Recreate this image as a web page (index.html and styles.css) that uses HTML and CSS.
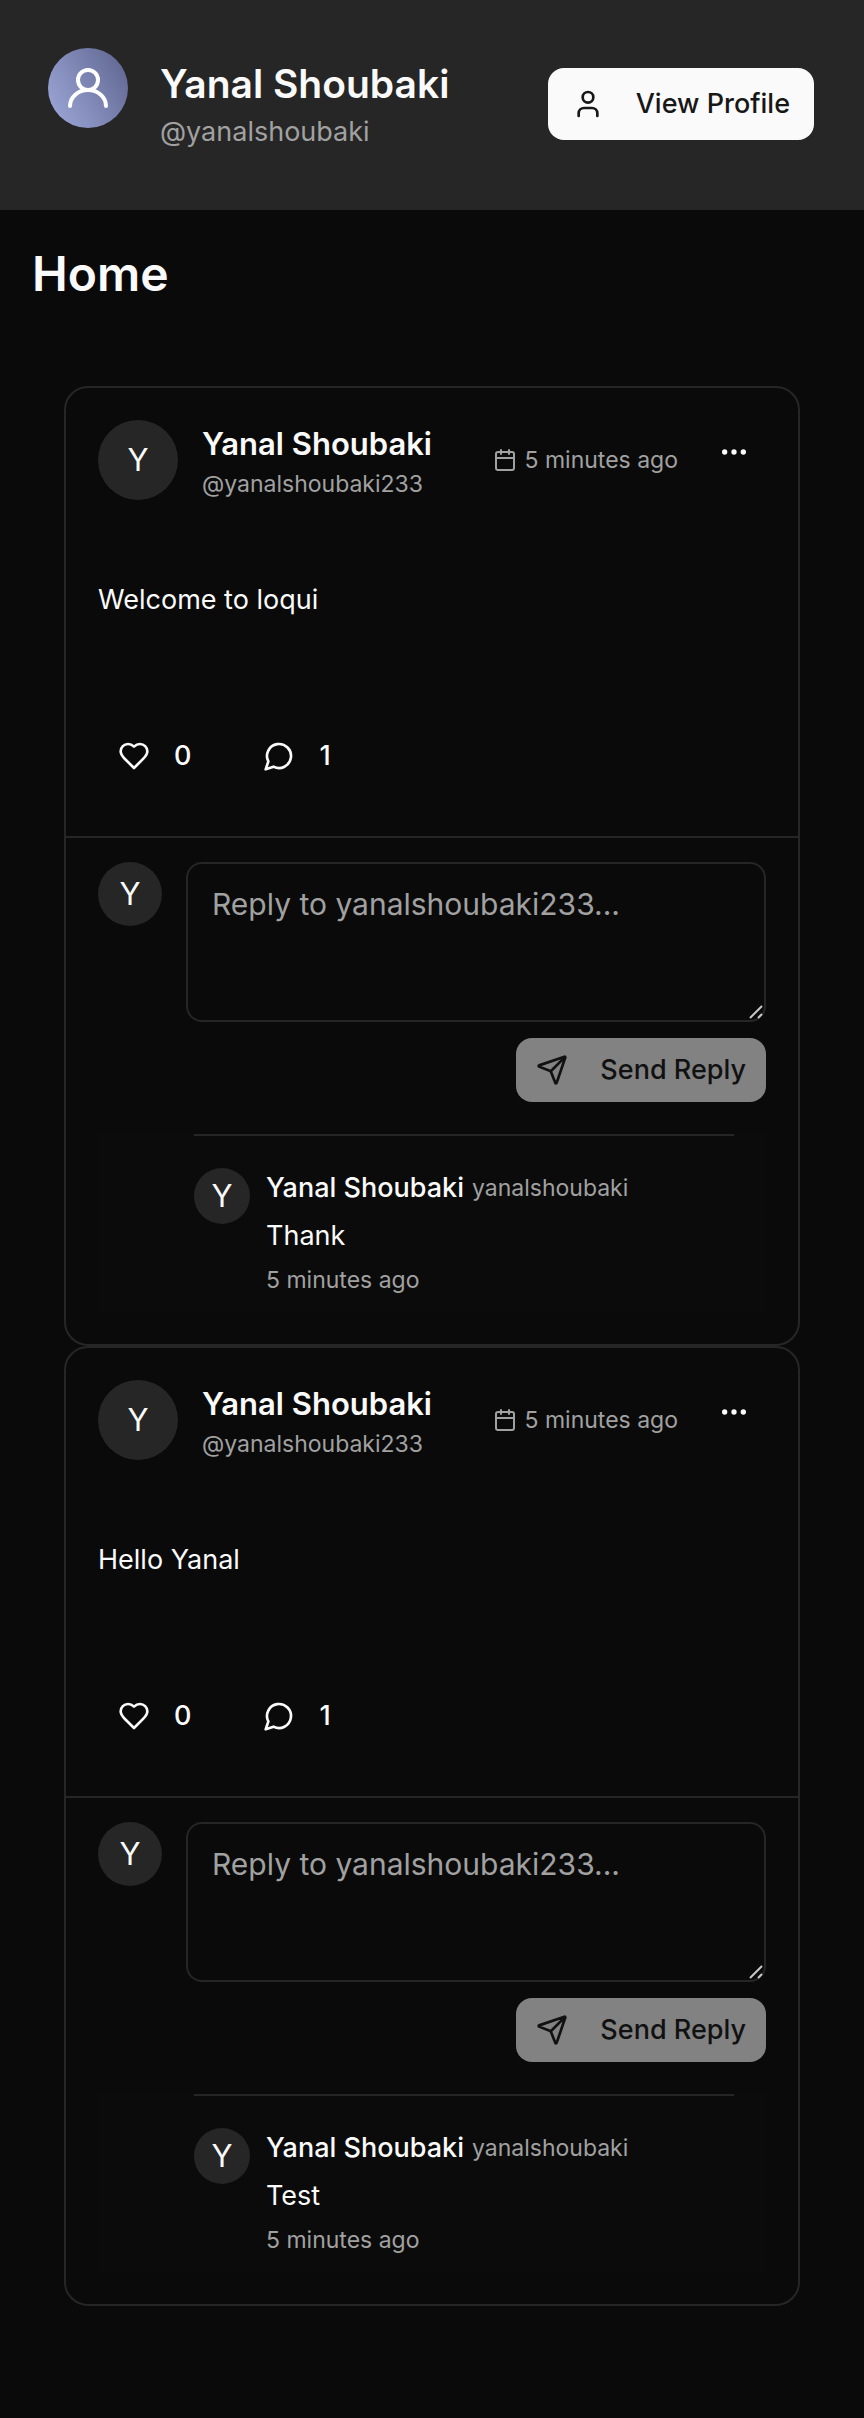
FILE: index.html
```html
<!DOCTYPE html>
<html lang="en">
<head>
<meta charset="utf-8">
<meta name="viewport" content="width=device-width, initial-scale=1">
<title>Home</title>
<link rel="stylesheet" href="styles.css">
</head>
<body>
<svg class="sprite" aria-hidden="true">
  <symbol id="user" viewBox="0 0 24 24"><path d="M19 21v-2a4 4 0 0 0-4-4H9a4 4 0 0 0-4 4v2"/><circle cx="12" cy="7" r="4"/></symbol>
  <symbol id="profile" viewBox="0 0 24 24"><circle cx="12" cy="8" r="5"/><path d="M3 21a9 8 0 0 1 18 0"/></symbol>
  <symbol id="calendar" viewBox="0 0 24 24"><path d="M8 2v4M16 2v4M3 10h18"/><rect x="3" y="4" width="18" height="18" rx="2"/></symbol>
  <symbol id="ellipsis" viewBox="0 0 24 24"><circle cx="12" cy="12" r="1"/><circle cx="19" cy="12" r="1"/><circle cx="5" cy="12" r="1"/></symbol>
  <symbol id="heart" viewBox="0 0 24 24"><path d="M19 14c1.490-1.460 3-3.210 3-5.500A5.500 5.500 0 0 0 16.500 3c-1.760 0-3 .5-4.500 2-1.500-1.500-2.740-2-4.500-2A5.500 5.500 0 0 0 2 8.500c0 2.300 1.500 4.050 3 5.500l7 7Z"/></symbol>
  <symbol id="bubble" viewBox="0 0 24 24"><path d="M7.900 20A9 9 0 1 0 4 16.100L2 22Z"/></symbol>
  <symbol id="send" viewBox="0 0 24 24"><path d="M14.536 21.686a.5.5 0 0 0 .937-.024l6.500-19a.496.496 0 0 0-.635-.635l-19 6.500a.5.5 0 0 0-.024.937l7.930 3.180a2 2 0 0 1 1.112 1.110zM21.854 2.147l-10.940 10.939"/></symbol>
</svg>

<header class="profile-bar">
  <div class="avatar avatar-gradient"><svg class="icon icon-profile"><use href="#profile"/></svg></div>
  <div class="profile-text">
    <p class="profile-name">Yanal Shoubaki</p>
    <p class="profile-handle">@yanalshoubaki</p>
  </div>
  <a class="button button-primary" href="#"><svg class="icon"><use href="#user"/></svg>View Profile</a>
</header>

<main class="page">
  <h1 class="page-title">Home</h1>
  <div class="feed">
    <article class="card">
      <header class="post-header">
        <div class="avatar">Y</div>
        <div class="author">
          <h2 class="author-name">Yanal Shoubaki</h2>
          <p class="meta">@yanalshoubaki233</p>
        </div>
        <p class="meta post-time"><svg class="icon icon-small"><use href="#calendar"/></svg>5 minutes ago</p>
        <button class="menu-button" type="button" aria-label="More options"><svg class="icon"><use href="#ellipsis"/></svg></button>
      </header>
      <p class="post-body">Welcome to loqui</p>
      <div class="actions">
        <button class="action" type="button" aria-label="Like"><svg class="icon"><use href="#heart"/></svg>0</button>
        <button class="action" type="button" aria-label="Comments"><svg class="icon"><use href="#bubble"/></svg>1</button>
      </div>
      <section class="replies">
        <form class="reply-form">
          <div class="avatar avatar-medium">Y</div>
          <div class="reply-fields">
            <textarea class="reply-input" aria-label="Reply" placeholder="Reply to yanalshoubaki233..."></textarea>
            <button class="button button-send" type="submit" disabled><svg class="icon"><use href="#send"/></svg>Send Reply</button>
          </div>
        </form>
        <div class="thread">
          <div class="reply">
            <div class="avatar avatar-small">Y</div>
            <div class="reply-text">
              <p class="reply-author"><span class="reply-name">Yanal Shoubaki</span><span class="meta">yanalshoubaki</span></p>
              <p class="reply-body">Thank</p>
              <p class="meta">5 minutes ago</p>
            </div>
          </div>
        </div>
      </section>
    </article>
    <article class="card">
      <header class="post-header">
        <div class="avatar">Y</div>
        <div class="author">
          <h2 class="author-name">Yanal Shoubaki</h2>
          <p class="meta">@yanalshoubaki233</p>
        </div>
        <p class="meta post-time"><svg class="icon icon-small"><use href="#calendar"/></svg>5 minutes ago</p>
        <button class="menu-button" type="button" aria-label="More options"><svg class="icon"><use href="#ellipsis"/></svg></button>
      </header>
      <p class="post-body">Hello Yanal</p>
      <div class="actions">
        <button class="action" type="button" aria-label="Like"><svg class="icon"><use href="#heart"/></svg>0</button>
        <button class="action" type="button" aria-label="Comments"><svg class="icon"><use href="#bubble"/></svg>1</button>
      </div>
      <section class="replies">
        <form class="reply-form">
          <div class="avatar avatar-medium">Y</div>
          <div class="reply-fields">
            <textarea class="reply-input" aria-label="Reply" placeholder="Reply to yanalshoubaki233..."></textarea>
            <button class="button button-send" type="submit" disabled><svg class="icon"><use href="#send"/></svg>Send Reply</button>
          </div>
        </form>
        <div class="thread">
          <div class="reply">
            <div class="avatar avatar-small">Y</div>
            <div class="reply-text">
              <p class="reply-author"><span class="reply-name">Yanal Shoubaki</span><span class="meta">yanalshoubaki</span></p>
              <p class="reply-body">Test</p>
              <p class="meta">5 minutes ago</p>
            </div>
          </div>
        </div>
      </section>
    </article>
  </div>
</main>
</body>
</html>
```

FILE: styles.css
```css
:root {
  --background: #0a0a0a;
  --foreground: #fafafa;
  --surface: #262626;
  --muted: #a1a1a1;
}

* { box-sizing: border-box; }

body {
  margin: 0;
  background: var(--background);
  color: var(--foreground);
  font-family: Inter, "Liberation Sans", sans-serif;
  font-size: 27px;
  line-height: 40px;
}

h1, h2, p { margin: 0; }

button, textarea { font: inherit; color: inherit; }

.sprite { display: none; }

.icon {
  flex: none;
  width: 32px;
  height: 32px;
  fill: none;
  stroke: currentColor;
  stroke-width: 2;
  stroke-linecap: round;
  stroke-linejoin: round;
}
.icon-small { width: 24px; height: 24px; }
.icon-profile { width: 48px; height: 48px; }

.avatar {
  display: flex;
  flex: none;
  align-items: center;
  justify-content: center;
  width: 80px;
  height: 80px;
  border-radius: 50%;
  background: var(--surface);
  font-size: 31px;
}
.avatar-medium { width: 64px; height: 64px; }
.avatar-small { width: 56px; height: 56px; }
.avatar-gradient {
  align-self: flex-start;
  background: linear-gradient(60deg, #a0abdc, #5c628c);
  color: #fff;
}

.meta {
  color: var(--muted);
  font-size: 23px;
  line-height: 32px;
}

.button {
  display: inline-flex;
  align-items: center;
  gap: 32px;
  border: 0;
  border-radius: 16px;
  font-weight: 500;
  text-decoration: none;
  white-space: nowrap;
}
.button-primary {
  height: 72px;
  padding: 0 24px;
  background: var(--foreground);
  color: #171717;
}
.button-send {
  align-self: flex-end;
  height: 64px;
  padding: 0 20px;
  background: #828282;
  color: #111;
}

.profile-bar {
  display: flex;
  align-items: center;
  gap: 32px;
  padding: 48px 50px 50px 48px;
  background: var(--surface);
}
.profile-text { flex: 1; padding: 8px 0; }
.profile-name { font-size: 39px; font-weight: 600; line-height: 56px; }
.profile-handle { color: var(--muted); }

.page { padding: 32px 32px 112px; }
.page-title { font-size: 48px; font-weight: 600; line-height: 64px; }
.feed { padding: 80px 32px 0; }

.card {
  border: 2px solid var(--surface);
  border-radius: 24px;
}
.post-header {
  display: flex;
  align-items: flex-start;
  gap: 24px;
  padding: 32px;
}
.author { flex: 1; }
.author-name { font-size: 31px; font-weight: 600; line-height: 48px; }
.post-time {
  display: flex;
  align-items: center;
  align-self: center;
  gap: 8px;
}
.menu-button {
  display: flex;
  align-items: center;
  justify-content: center;
  width: 64px;
  height: 64px;
  padding: 0;
  border: 0;
  background: none;
}
.post-body { padding: 48px 32px; }
.actions { display: flex; gap: 32px; padding: 56px 32px 48px; }
.action {
  display: flex;
  align-items: center;
  gap: 24px;
  height: 64px;
  padding: 0 20px;
  border: 0;
  background: none;
  font-weight: 500;
}

.replies {
  padding: 24px 32px 32px;
  border-top: 2px solid var(--surface);
}
.reply-form { display: flex; gap: 24px; }
.reply-fields {
  display: flex;
  flex: 1;
  flex-direction: column;
  gap: 16px;
}
.reply-input {
  display: block;
  width: 100%;
  height: 160px;
  padding: 16px 24px;
  border: 2px solid var(--surface);
  border-radius: 16px;
  outline: 0;
  background: transparent;
  font-size: 30px;
  line-height: 48px;
  resize: vertical;
}
.reply-input::placeholder { color: var(--muted); }
.reply-input::-webkit-resizer {
  background: url("data:image/svg+xml,%3Csvg xmlns='http://www.w3.org/2000/svg' viewBox='0 0 15 15'%3E%3Cpath d='M1 13L13 1M9 13L13 9' stroke='%23c8c8c8' stroke-width='2'/%3E%3C/svg%3E") center / 15px 15px no-repeat;
}

.thread {
  margin-top: 32px;
  padding: 0 32px 0 96px;
  background: #0b0b0b;
}
.reply {
  display: flex;
  gap: 16px;
  padding: 32px 0 16px;
  border-top: 2px solid var(--surface);
}
.reply-text {
  display: flex;
  flex-direction: column;
  gap: 8px;
}
.reply-author { display: flex; align-items: center; gap: 8px; }
.reply-name { font-weight: 500; }
```
